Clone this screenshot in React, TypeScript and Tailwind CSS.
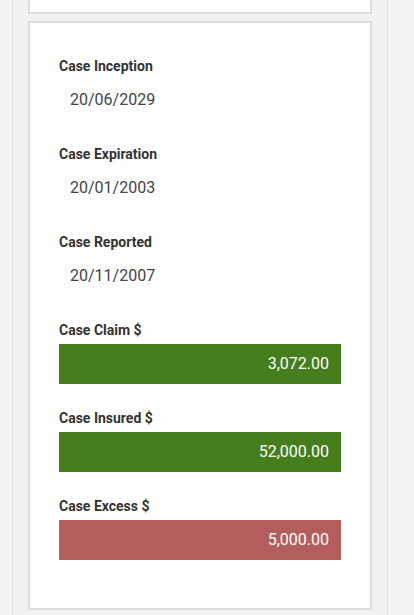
type Field = { label: string; value: string; tone?: 'green' | 'red' };

const fields: Field[] = [
  { label: 'Case Inception', value: '20/06/2029' },
  { label: 'Case Expiration', value: '20/01/2003' },
  { label: 'Case Reported', value: '20/11/2007' },
  { label: 'Case Claim $', value: '3,072.00', tone: 'green' },
  { label: 'Case Insured $', value: '52,000.00', tone: 'green' },
  { label: 'Case Excess $', value: '5,000.00', tone: 'red' },
];

function FieldRow({ field }: { field: Field }) {
  return (
    <div className="mb-6">
      <div className="h-5 text-[14px] font-bold leading-5 text-[#333]">{field.label}</div>
      {field.tone ? (
        <div
          className={
            field.tone === 'green'
              ? 'mt-1 flex h-10 items-center justify-end bg-[#467d1d] pr-3 text-[16px] text-white'
              : 'mt-1 flex h-10 items-center justify-end bg-[#b35e5c] pr-3 text-[16px] text-white'
          }
        >
          {field.value}
        </div>
      ) : (
        <div className="mt-1 flex h-10 items-center pl-[11px] text-[16px] text-[#444]">{field.value}</div>
      )}
    </div>
  );
}

export default function App() {
  return (
    <div
      className="min-h-[615px] bg-[#f3f3f3] pl-3 pr-[26px]"
      style={{ fontFamily: 'Roboto, "Liberation Sans", sans-serif' }}
    >
      <div className="min-h-[615px] border-x border-[#e2e2e2] bg-[#f1f1f1] px-[15px]">
        {/* card above, cut off by the viewport */}
        <div className="h-[14px] border-x-2 border-b-2 border-[#dedede] bg-white" />

        <div className="mt-[7px] border-2 border-[#dcdcdc] bg-white px-[29px] pb-[24px] pt-[33px]">
          {fields.map((f) => (
            <FieldRow key={f.label} field={f} />
          ))}
        </div>
      </div>
    </div>
  );
}
